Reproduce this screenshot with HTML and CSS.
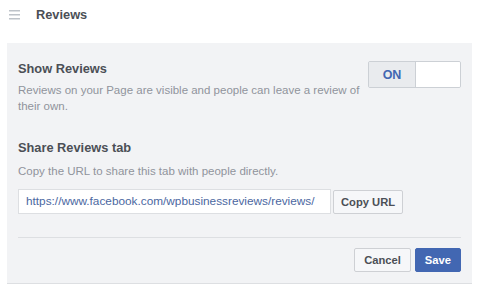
FILE: index.html
```html
<!DOCTYPE html>
<html>
<head>
<meta charset="utf-8">
<link rel="stylesheet" href="styles.css">
</head>
<body>
<header class="top">
  <svg class="menu" width="12" height="10" viewBox="0 0 12 10"><rect x="0" y="0" width="11" height="1.5" fill="#bec3c9"/><rect x="0" y="4" width="11" height="1.5" fill="#bec3c9"/><rect x="0" y="8" width="11" height="1.5" fill="#bec3c9"/></svg>
  <h1 class="title">Reviews</h1>
</header>
<section class="panel">
  <div class="row">
    <div class="info">
      <h2 class="label">Show Reviews</h2>
      <p class="desc">Reviews on your Page are visible and people can leave a review of their own.</p>
    </div>
    <div class="toggle"><span class="on">ON</span><span class="off"></span></div>
  </div>
  <h2 class="label share">Share Reviews tab</h2>
  <p class="desc sub">Copy the URL to share this tab with people directly.</p>
  <div class="urlrow">
    <div class="url">https://www.facebook.com/wpbusinessreviews/reviews/</div>
    <button class="btn copy">Copy URL</button>
  </div>
  <div class="footer">
    <button class="btn">Cancel</button>
    <button class="btn primary">Save</button>
  </div>
</section>
</body>
</html>
```
FILE: styles.css
```css
html, body { margin: 0; padding: 0; background: #fff; }
body { font-family: "Liberation Sans", Arial, sans-serif; color: #4b4f56; }
.top { height: 43px; display: flex; align-items: center; padding-left: 9px; box-sizing: border-box; padding-bottom: 13px; padding-top: 0; }
.menu { display: block; }
.title { margin: 0 0 0 15px; font-size: 12.8px; font-weight: bold; line-height: 16px; color: #4b4f56; }
.panel { margin: 0 7px; background: #f2f3f5; border-bottom: 1px solid #dddfe2; padding: 18px 11px 11px; }
.row { display: flex; justify-content: space-between; align-items: flex-start; }
.info { width: 345px; }
.label { margin: 0; font-size: 12.8px; font-weight: bold; line-height: 16px; color: #4b4f56; }
.desc { margin: 5px 0 0; font-size: 11.5px; line-height: 16px; color: #90949c; }
.toggle { display: flex; width: 93px; height: 27px; box-sizing: border-box; border: 1px solid #ccd0d5; border-radius: 2px; overflow: hidden; }
.on { width: 46px; background: #e9ebee; border-right: 1px solid #ccd0d5; color: #4267b2; font-weight: bold; font-size: 12.5px; display: flex; align-items: center; justify-content: center; }
.off { flex: 1; background: #fff; }
.share { margin-top: 26px; }
.sub { margin-top: 7px; }
.urlrow { display: flex; align-items: center; margin-top: 10px; }
.url { width: 313px; height: 25px; box-sizing: border-box; border: 1px solid #dddfe2; background: #fff; padding-left: 7px; font-size: 11.8px; line-height: 23px; color: #4b67a1; }
.btn { font-family: "Liberation Sans", Arial, sans-serif; font-size: 11.2px; font-weight: bold; height: 24px; padding: 0 9px; border: 1px solid #ced0d4; border-radius: 2px; background: #f6f7f9; color: #4b4f56; }
.urlrow .copy { margin-left: 2px; padding: 0 7px; }
.footer { display: flex; justify-content: flex-end; gap: 4px; margin-top: 23px; padding-top: 10px; border-top: 1px solid #dddfe2; }
.primary { background: #4267b2; border-color: #4267b2; color: #fff; }
```
